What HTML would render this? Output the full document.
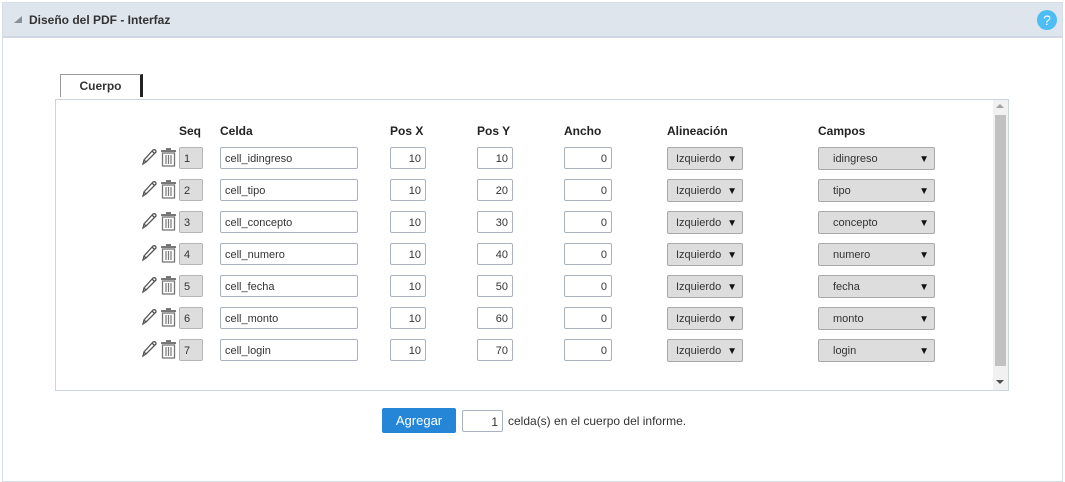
<!DOCTYPE html>
<html><head><meta charset="utf-8"><style>
*{box-sizing:border-box;margin:0;padding:0}
body{width:1065px;height:463px;background:#fff;font-family:"Liberation Sans",sans-serif;font-size:12px;color:#333;position:relative;overflow:hidden}
.a{position:absolute}
.panel{left:2px;top:2px;width:1061px;height:480px;border:1px solid #d5dde6}
.hdr{left:3px;top:3px;width:1059px;height:35px;background:#dfe5ed;border-bottom:2px solid #cfd8e2}
.ttl{left:29px;top:13px;font-weight:bold;font-size:12px;color:#333}
.tri{left:14px;top:16px;width:0;height:0;border-left:8px solid transparent;border-bottom:7px solid #8a8f96}
.help{left:1037px;top:10px;width:20px;height:20px;border-radius:50%;background:#4cbdf5;color:#fff;text-align:center;line-height:20px;font-size:14px}
.tab{left:60px;top:74px;width:83px;height:23px;border:1px solid #999;border-right:3px solid #222;border-bottom:none;text-align:center;font-weight:bold;line-height:22px}
.box{left:55px;top:99px;width:954px;height:292px;border:1px solid #ccd5de}
.sb{left:993px;top:100px;width:15px;height:290px;background:#f1f1f1}
.th{left:995px;top:115px;width:11px;height:251px;background:#c1c1c1}
.h{top:124px;font-weight:bold;font-size:12px;color:#222}
.in{height:22px;border:1px solid #a9b2bd;border-radius:2px;background:#fff;font-size:11px;line-height:22px;padding:0 4px}
.r{text-align:right}
.seq{width:24px;height:22px;border:1px solid #b5b5b5;background:#ddd;font-size:11px;line-height:22px;padding-left:4px;border-radius:2px}
.sel{height:23px;border:1px solid #a9a9a9;background:#ddd;border-radius:2px;font-size:11px;line-height:23px;padding-left:8px}
.sel b{position:absolute;right:5px;top:0;font-size:10px;color:#111}
.btn{left:382px;top:408px;width:74px;height:25px;background:#2586d7;color:#fff;font-size:13px;text-align:center;line-height:25px;border-radius:2px}
</style></head><body>
<div class="a panel"></div>
<div class="a hdr"></div>
<div class="a tri"></div>
<div class="a ttl">Diseño del PDF - Interfaz</div>
<div class="a help">?</div>
<div class="a tab">Cuerpo</div>
<div class="a box"></div>
<div class="a sb"></div>
<div class="a th"></div>
<div class="a" style="left:996px;top:104px;border-left:4px solid transparent;border-right:4px solid transparent;border-bottom:4px solid #a0a0a0"></div>
<div class="a" style="left:996px;top:380px;border-left:4px solid transparent;border-right:4px solid transparent;border-top:4px solid #505050"></div>
<div class="a h" style="left:179px">Seq</div>
<div class="a h" style="left:220px">Celda</div>
<div class="a h" style="left:390px">Pos X</div>
<div class="a h" style="left:477px">Pos Y</div>
<div class="a h" style="left:564px">Ancho</div>
<div class="a h" style="left:667px">Alineación</div>
<div class="a h" style="left:818px">Campos</div>
<div id="rows"></div>
<div class="a btn">Agregar</div>
<div class="a in r" style="left:462px;top:410px;width:41px;height:22px;font-size:12px">1</div>
<div class="a" style="left:508px;top:414px;font-size:12px">celda(s) en el cuerpo del informe.</div>
<script>
var n=["idingreso","tipo","concepto","numero","fecha","monto","login"],h="";
for(var i=0;i<7;i++){var y=147+i*32;
h+='<svg class="a" style="left:140px;top:'+(y)+'px" width="18" height="20" viewBox="0 0 18 20"><path d="M3 17 L4 13 L13 3 Q15 2 16 4 L16 5 L6 15 Z M4 13 L6 15 M12 4 L15 7" fill="none" stroke="#555" stroke-width="1.3"/></svg>';
h+='<svg class="a" style="left:160px;top:'+(y)+'px" width="17" height="20" viewBox="0 0 17 20"><rect x="1" y="3" width="15" height="2" fill="#777"/><rect x="6" y="1" width="5" height="2" fill="#777"/><rect x="2.5" y="6" width="12" height="13" fill="none" stroke="#777" stroke-width="1.3"/><path d="M6 8v9M8.5 8v9M11 8v9" stroke="#777" stroke-width="1.2"/></svg>';
h+='<div class="a seq" style="left:179px;top:'+y+'px">'+(i+1)+'</div>';
h+='<div class="a in" style="left:220px;top:'+y+'px;width:138px">cell_'+n[i]+'</div>';
h+='<div class="a in r" style="left:390px;top:'+y+'px;width:36px">10</div>';
h+='<div class="a in r" style="left:477px;top:'+y+'px;width:36px">'+((i+1)*10)+'</div>';
h+='<div class="a in r" style="left:564px;top:'+y+'px;width:48px">0</div>';
h+='<div class="a sel" style="left:667px;top:'+y+'px;width:76px">Izquierdo<b>▼</b></div>';
h+='<div class="a sel" style="left:818px;top:'+y+'px;width:117px;padding-left:14px">'+n[i]+'<b>▼</b></div>';}
document.getElementById("rows").innerHTML=h;
</script>
</body></html>
